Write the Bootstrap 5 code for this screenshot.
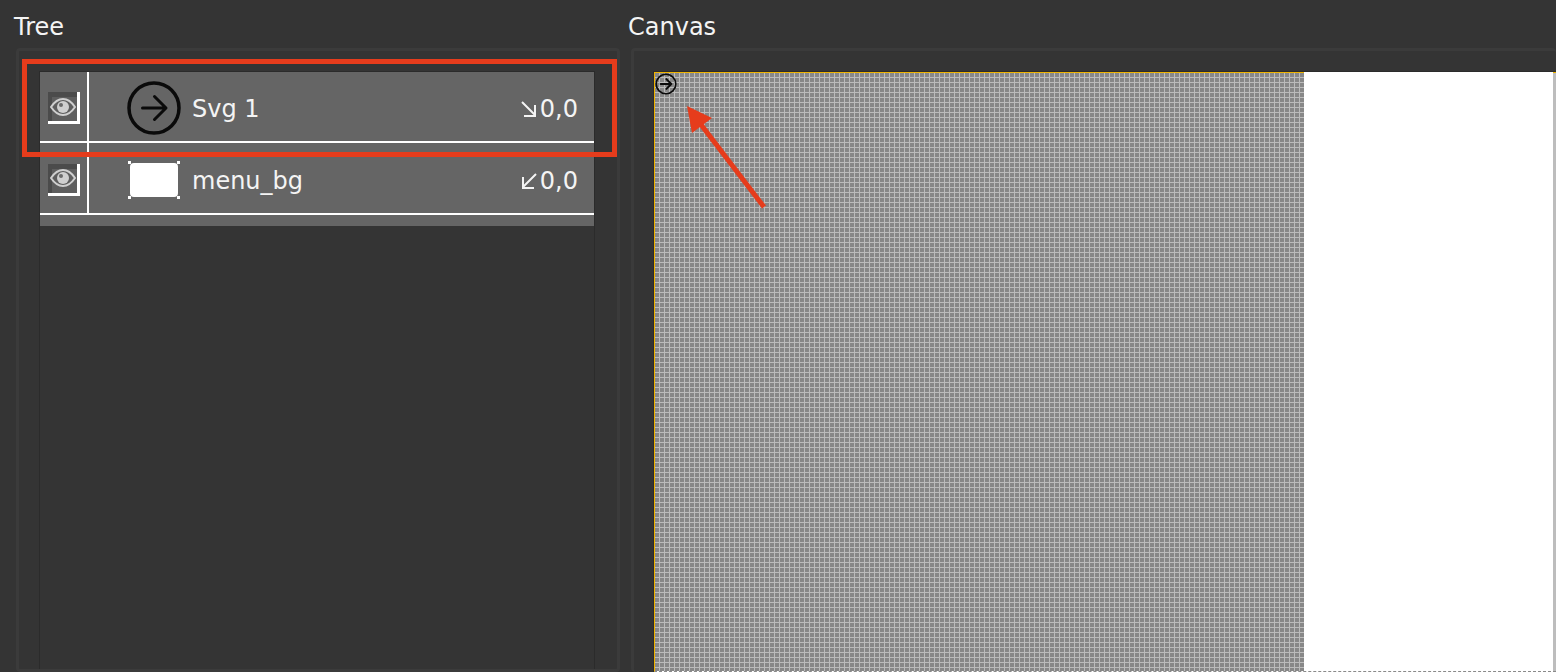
<!DOCTYPE html>
<html lang="en">

<head>
    <meta charset="UTF-8">
    <meta name="viewport" content="width=device-width, initial-scale=1.0">
    <title>Tree and Canvas</title>
    <link href="https://cdn.jsdelivr.net/npm/bootstrap@5.3.3/dist/css/bootstrap.min.css" rel="stylesheet">
    <style>
        html, body {
            height: 672px;
            overflow: hidden;
        }

        body {
            background: #343434;
            color: #f4f4f4;
            font-family: "DejaVu Sans", "Liberation Sans", sans-serif;
        }

        .editor-wrap {
            height: 672px;
            padding-left: 16px;
            gap: 11px;
        }

        .pane-tree {
            width: 604px;
            flex: none;
        }

        .pane-canvas {
            flex: 1 1 0;
            min-width: 0;
        }

        .pane-title {
            height: 48px;
            font-size: 24px;
            line-height: 54px;
            margin-left: -2px;
            margin-bottom: 0;
            font-weight: 400;
        }

        .pane-canvas .pane-title {
            margin-left: -3px;
        }

        .pane-body {
            flex: 1 1 0;
            min-height: 0;
            border: 3px solid #3b3b3b;
            border-radius: 4px;
            padding: 20px 20px 0;
        }

        .pane-canvas .pane-body {
            border-right: 0;
            padding: 21px 0 0 20px;
            border-bottom: 0;
        }

        .tree-list {
            width: 556px;
            height: 100%;
            border: 1px solid #2b2b2b;
            border-bottom: 0;
        }

        .tree-row {
            height: 71px;
            background: #656565;
            border-bottom: 2px solid #fff;
            font-size: 24px;
        }

        .tree-row + .tree-row {
            height: 72px;
        }

        .tree-foot {
            height: 11px;
            background: #656565;
        }

        .eye-cell {
            width: 49px;
            border-right: 2px solid #fff;
            padding: 3px 0 0 8px;
        }

        .eye-box {
            width: 32px;
            height: 32px;
            background: #5e5e5e;
            box-shadow: inset 4px 5px 0 #4b4b4b;
            border-right: 3px solid #fff;
            border-bottom: 3px solid #fff;
        }

        .row-nudge {
            margin-top: 3px;
        }

        .row-label {
            margin-top: 5px;
        }

        .thumb-cell {
            width: 103px;
            padding-left: 38px;
        }

        .thumb-shape {
            width: 48px;
            height: 34px;
            background: #fff;
            border-radius: 4px;
            margin-left: 3px;
        }

        .thumb-handle {
            width: 3px;
            height: 3px;
            background: #fff;
        }

        .thumb-handle.h-tl { top: -2px; left: -2px; }
        .thumb-handle.h-tr { top: -2px; right: -2px; }
        .thumb-handle.h-bl { bottom: -2px; left: -2px; }
        .thumb-handle.h-br { bottom: -2px; right: -2px; }

        .row-coords {
            padding-right: 16px;
        }

        .row-coords svg {
            margin-right: 2px;
        }

        .canvas-stage {
            height: 100%;
            background: #fff;
            border-left: 1px solid #f0b400;
            outline: 1px solid #2b2b2b;
            border-bottom: 1px dashed #8a8a8a;
        }

        .canvas-grid {
            width: 649px;
            border-top: 1px solid #f0b400;
            background-color: #888;
            background-image:
                repeating-linear-gradient(to right, transparent 0 4px, #bcbcbc 4px 5px),
                repeating-linear-gradient(to bottom, transparent 0 4px, #bcbcbc 4px 5px);
        }

        .canvas-white {
            flex: 1 1 0;
            background: #fff;
        }

        .canvas-edge {
            width: 3px;
            border-top: 1px solid #f0b400;
            background: #bdbdbd;
        }

        .canvas-icon {
            top: 1px;
            left: 0;
        }

        .note-box {
            left: 22px;
            top: 59px;
            width: 595px;
            height: 98px;
            border: 5px solid #e63c1c;
        }

        .note-arrow {
            left: 680px;
            top: 100px;
        }
    </style>
</head>

<body>
    <div class="editor-wrap d-flex position-relative">
        <!-- Tree -->
        <div class="pane-tree d-flex flex-column">
            <h2 class="pane-title">Tree</h2>
            <div class="pane-body">
                <div class="tree-list">
                    <div class="tree-row d-flex align-items-center">
                        <div class="eye-cell h-100 d-flex align-items-center">
                            <div class="eye-box d-flex align-items-center justify-content-center">
                                <svg width="26" height="18" viewBox="0 0 26 18">
                                    <path d="M1 9C5 3 9 1 13 1s8 2 12 8c-4 6-8 8-12 8S5 15 1 9z" fill="none" stroke="#cfcfcf" stroke-width="2" />
                                    <circle cx="13" cy="9" r="6" fill="#cfcfcf" />
                                    <circle cx="11" cy="7" r="2" fill="#6a6a6a" />
                                </svg>
                            </div>
                        </div>
                        <div class="thumb-cell row-nudge">
                            <svg class="d-block" width="54" height="54" viewBox="0 0 54 54">
                                <circle cx="27" cy="27" r="25" fill="none" stroke="#0a0a0a" stroke-width="3.5" />
                                <path d="M15.5 27H38.5M27.5 15.5L39 27L27.5 38.5" fill="none" stroke="#0a0a0a" stroke-width="3" stroke-linecap="round" stroke-linejoin="round" />
                            </svg>
                        </div>
                        <span class="row-label">Svg 1</span>
                        <div class="row-coords row-label ms-auto d-flex align-items-center">
                            <svg width="18" height="18" viewBox="0 0 18 18">
                                <path d="M2 2L15 15M15 5V16H4" fill="none" stroke="#f4f4f4" stroke-width="2" />
                            </svg>
                            <span>0,0</span>
                        </div>
                    </div>
                    <div class="tree-row d-flex align-items-center">
                        <div class="eye-cell h-100 d-flex align-items-center">
                            <div class="eye-box d-flex align-items-center justify-content-center">
                                <svg width="26" height="18" viewBox="0 0 26 18">
                                    <path d="M1 9C5 3 9 1 13 1s8 2 12 8c-4 6-8 8-12 8S5 15 1 9z" fill="none" stroke="#cfcfcf" stroke-width="2" />
                                    <circle cx="13" cy="9" r="6" fill="#cfcfcf" />
                                    <circle cx="11" cy="7" r="2" fill="#6a6a6a" />
                                </svg>
                            </div>
                        </div>
                        <div class="thumb-cell row-nudge">
                            <div class="thumb-shape position-relative">
                                <div class="thumb-handle h-tl position-absolute"></div>
                                <div class="thumb-handle h-tr position-absolute"></div>
                                <div class="thumb-handle h-bl position-absolute"></div>
                                <div class="thumb-handle h-br position-absolute"></div>
                            </div>
                        </div>
                        <span class="row-label">menu_bg</span>
                        <div class="row-coords row-label ms-auto d-flex align-items-center">
                            <svg width="18" height="18" viewBox="0 0 18 18">
                                <path d="M16 2L3 15M3 5V16H14" fill="none" stroke="#f4f4f4" stroke-width="2" />
                            </svg>
                            <span>0,0</span>
                        </div>
                    </div>
                    <div class="tree-foot"></div>
                </div>
            </div>
        </div>

        <!-- Canvas -->
        <div class="pane-canvas d-flex flex-column">
            <h2 class="pane-title">Canvas</h2>
            <div class="pane-body">
                <div class="canvas-stage d-flex position-relative">
                    <div class="canvas-grid h-100"></div>
                    <div class="canvas-white h-100"></div>
                    <div class="canvas-edge h-100"></div>
                    <svg class="canvas-icon position-absolute" width="22" height="22" viewBox="0 0 54 54">
                        <circle cx="27" cy="27" r="24" fill="none" stroke="#0a0a0a" stroke-width="4" />
                        <path d="M14 27H40M28 15L40 27L28 39" fill="none" stroke="#0a0a0a" stroke-width="5" stroke-linecap="round" stroke-linejoin="round" />
                    </svg>
                </div>
            </div>
        </div>

        <!-- Annotations -->
        <div class="note-box position-absolute"></div>
        <svg class="note-arrow position-absolute" width="96" height="116" viewBox="0 0 96 116">
            <path d="M84 107L19 22" stroke="#e63c1c" stroke-width="5" fill="none" />
            <path d="M7 6L32 18L12 33z" fill="#e63c1c" />
        </svg>
    </div>

    <script src="https://cdn.jsdelivr.net/npm/bootstrap@5.3.3/dist/js/bootstrap.bundle.min.js"></script>
</body>

</html>
